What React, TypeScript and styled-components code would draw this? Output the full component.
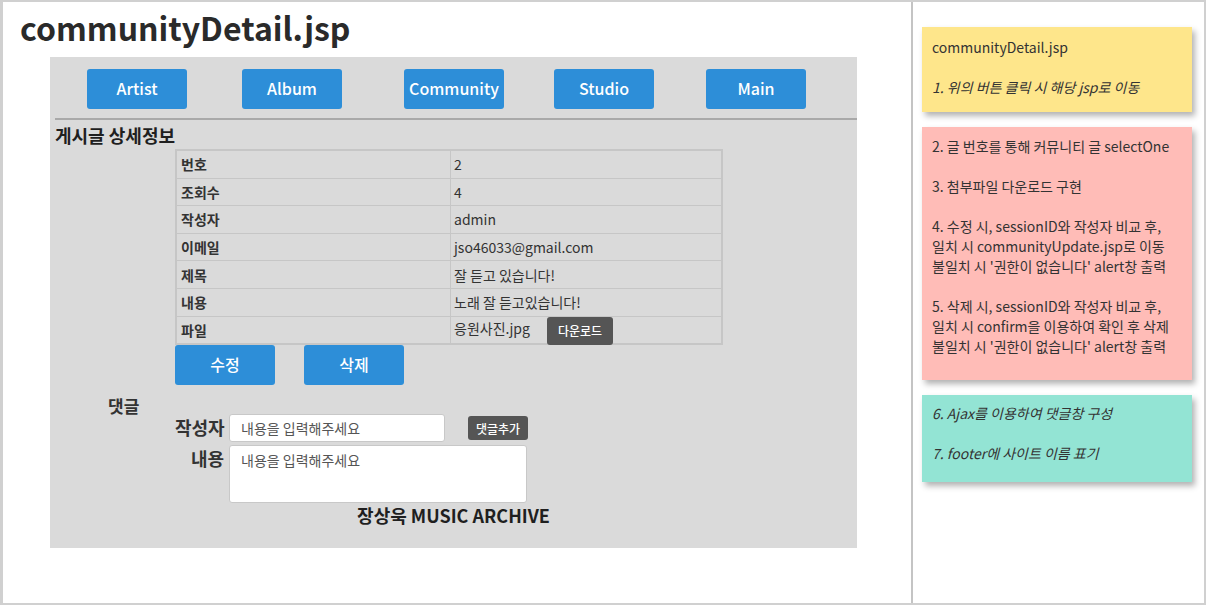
import React from 'react'
import styled, { createGlobalStyle } from 'styled-components'

const GlobalStyle = createGlobalStyle`
  html, body {
    margin: 0;
    padding: 0;
    background: #fff;
    font-family: "Noto Sans CJK KR", "Noto Sans", sans-serif;
  }
`

const navItems = [
  { label: 'Artist', offset: 37 },
  { label: 'Album', offset: 55 },
  { label: 'Community', offset: 62 },
  { label: 'Studio', offset: 50 },
  { label: 'Main', offset: 52 },
]

const rows = [
  { key: '번호', value: '2' },
  { key: '조회수', value: '4' },
  { key: '작성자', value: 'admin' },
  { key: '이메일', value: 'jso46033@gmail.com' },
  { key: '제목', value: '잘 듣고 있습니다!' },
  { key: '내용', value: '노래 잘 듣고있습니다!' },
]

const App = () => {
  return (
    <>
      <GlobalStyle />
      <Frame>
        <LeftPane>
          <PageTitle>communityDetail.jsp</PageTitle>
          <Panel>
            <Nav>
              {navItems.map((n) => (
                <NavButton key={n.label} offset={n.offset}>{n.label}</NavButton>
              ))}
            </Nav>
            <Rule />
            <SectionTitle>게시글 상세정보</SectionTitle>
            <DetailTable>
              <tbody>
                {rows.map((r) => (
                  <tr key={r.key}>
                    <KeyCell>{r.key}</KeyCell>
                    <ValueCell>{r.value}</ValueCell>
                  </tr>
                ))}
                <tr>
                  <KeyCell>파일</KeyCell>
                  <ValueCell>
                    <FileName>응원사진.jpg</FileName>
                    <DarkButton>다운로드</DarkButton>
                  </ValueCell>
                </tr>
              </tbody>
            </DetailTable>
            <ActionRow>
              <ActionButton>수정</ActionButton>
              <ActionButton>삭제</ActionButton>
            </ActionRow>
            <CommentTitle>댓글</CommentTitle>
            <CommentForm>
              <FormLabel>작성자</FormLabel>
              <FieldRow>
                <TextInput placeholder="내용을 입력해주세요" />
                <SmallButton>댓글추가</SmallButton>
              </FieldRow>
              <FormLabel>내용</FormLabel>
              <TextArea placeholder="내용을 입력해주세요" />
            </CommentForm>
            <Footer>장상욱 MUSIC ARCHIVE</Footer>
          </Panel>
        </LeftPane>
        <RightPane>
          <Note bg="#fee68b" pt={10} pb={15}>
            <p>communityDetail.jsp</p>
            <Gap />
            <p><em>1. 위의 버튼 클릭 시 해당 jsp로 이동</em></p>
          </Note>
          <Note bg="#ffbcb7" pt={9} pb={24}>
            <p>2. 글 번호를 통해 커뮤니티 글 selectOne</p>
            <Gap />
            <p>3. 첨부파일 다운로드 구현</p>
            <Gap />
            <p>4. 수정 시, sessionID와 작성자 비교 후,</p>
            <p>일치 시 communityUpdate.jsp로 이동</p>
            <p>불일치 시 '권한이 없습니다' alert창 출력</p>
            <Gap />
            <p>5. 삭제 시, sessionID와 작성자 비교 후,</p>
            <p>일치 시 confirm을 이용하여 확인 후 삭제</p>
            <p>불일치 시 '권한이 없습니다' alert창 출력</p>
          </Note>
          <Note bg="#93e4d4" pt={8} pb={19}>
            <p><em>6. Ajax를 이용하여 댓글창 구성</em></p>
            <Gap />
            <p><em>7. footer에 사이트 이름 표기</em></p>
          </Note>
        </RightPane>
      </Frame>
    </>
  )
}

export default App

const Frame = styled.div`
  width: 1201px;
  height: 601px;
  border-top: 2px solid #d0d0d0;
  border-left: 3px solid #d0d0d0;
  border-right: 2px solid #d0d0d0;
  border-bottom: 2px solid #d0d0d0;
  display: flex;
`

const LeftPane = styled.div`
  width: 910px;
  border-right: 2px solid #c4c4c4;
  box-sizing: border-box;
  padding-left: 17px;
`

const PageTitle = styled.div`
  font-size: 32px;
  font-weight: 700;
  color: #2a2a2a;
  line-height: 40px;
  margin-top: 5px;
`

const Panel = styled.div`
  margin-top: 10px;
  margin-left: 30px;
  width: 807px;
  height: 491px;
  background: #dadada;
  display: flex;
  flex-direction: column;
`

const Nav = styled.div`
  display: flex;
  padding-top: 12px;
`

const NavButton = styled.div<{ offset: number }>`
  width: 100px;
  height: 40px;
  box-sizing: border-box;
  padding-bottom: 3px;
  margin-left: ${(p) => p.offset}px;
  background: #2d8ed8;
  border-radius: 3px;
  color: #fff;
  font-size: 16px;
  font-weight: 500;
  display: flex;
  align-items: center;
  justify-content: center;
`

const Rule = styled.div`
  margin: 9px 0 0 5px;
  height: 2px;
  background: #a9a9a9;
`

const SectionTitle = styled.div`
  font-size: 18px;
  font-weight: 700;
  color: #1f1f1f;
  margin: 4px 0 0 5px;
  line-height: 22px;
`

const DetailTable = styled.table`
  margin: 3px 0 0 125px;
  width: 548px;
  border-collapse: collapse;
  border: 2px solid #c6c6c6;
  font-size: 14px;
  color: #333;

  td {
    border: 1px solid #c6c6c6;
    height: 26.6px;
    padding: 0 4px;
    line-height: 18px;
  }
`

const KeyCell = styled.td`
  width: 265px;
  font-weight: 700;
`

const ValueCell = styled.td`
  padding-left: 3px !important;
`

const FileName = styled.span`
  display: inline-block;
  width: 93px;
`

const DarkButton = styled.span`
  display: inline-flex;
  align-items: center;
  justify-content: center;
  width: 66px;
  height: 28px;
  margin-bottom: -2px;
  background: #555;
  color: #fff;
  font-size: 12px;
  font-weight: 500;
  border-radius: 3px;
  vertical-align: middle;
`

const ActionRow = styled.div`
  display: flex;
  gap: 29px;
  margin-left: 125px;
`

const ActionButton = styled(NavButton).attrs({ offset: 0 })``

const CommentTitle = styled.div`
  font-size: 17px;
  font-weight: 700;
  color: #333;
  margin: 13px 0 0 58px;
  line-height: 16px;
`

const CommentForm = styled.div`
  display: grid;
  grid-template-columns: 49px auto;
  column-gap: 5px;
  row-gap: 3px;
  margin: 0 0 0 125px;
`

const FormLabel = styled.div`
  font-size: 18px;
  font-weight: 700;
  color: #333;
  text-align: right;
  line-height: 24px;
  padding-top: 1px;
  white-space: nowrap;
`

const FieldRow = styled.div`
  display: flex;
  align-items: center;
`

const TextInput = styled.input`
  width: 216px;
  height: 28px;
  box-sizing: border-box;
  border: 1px solid #c8c8c8;
  border-radius: 3px;
  padding: 0 11px;
  font-family: inherit;
  font-size: 14px;
  outline: none;

  &::placeholder {
    color: #555;
  }
`

const SmallButton = styled.span`
  margin-left: 23px;
  width: 60px;
  height: 24px;
  background: #555;
  color: #fff;
  font-size: 12px;
  font-weight: 500;
  border-radius: 3px;
  display: flex;
  align-items: center;
  justify-content: center;
`

const TextArea = styled.textarea`
  width: 298px;
  height: 58px;
  box-sizing: border-box;
  border: 1px solid #c8c8c8;
  border-radius: 3px;
  padding: 4px 11px;
  font-family: inherit;
  font-size: 14px;
  resize: none;
  outline: none;

  &::placeholder {
    color: #555;
  }
`

const Footer = styled.div`
  text-align: center;
  font-size: 18px;
  font-weight: 700;
  color: #1f1f1f;
  line-height: 24px;
  margin-top: 0;
`

const RightPane = styled.div`
  flex: 1;
  padding: 25px 0 0 9px;
  display: flex;
  flex-direction: column;
  gap: 15px;
`

const Note = styled.div<{ bg: string; pt: number; pb: number }>`
  width: 270px;
  box-sizing: border-box;
  background: ${(p) => p.bg};
  padding: ${(p) => p.pt}px 10px ${(p) => p.pb}px 10px;
  box-shadow: 3px 4px 6px rgba(0, 0, 0, 0.3);
  font-size: 14px;
  line-height: 20px;
  color: #333;

  p {
    margin: 0;
    white-space: nowrap;
  }
`

const Gap = styled.div`
  height: 20px;
`
